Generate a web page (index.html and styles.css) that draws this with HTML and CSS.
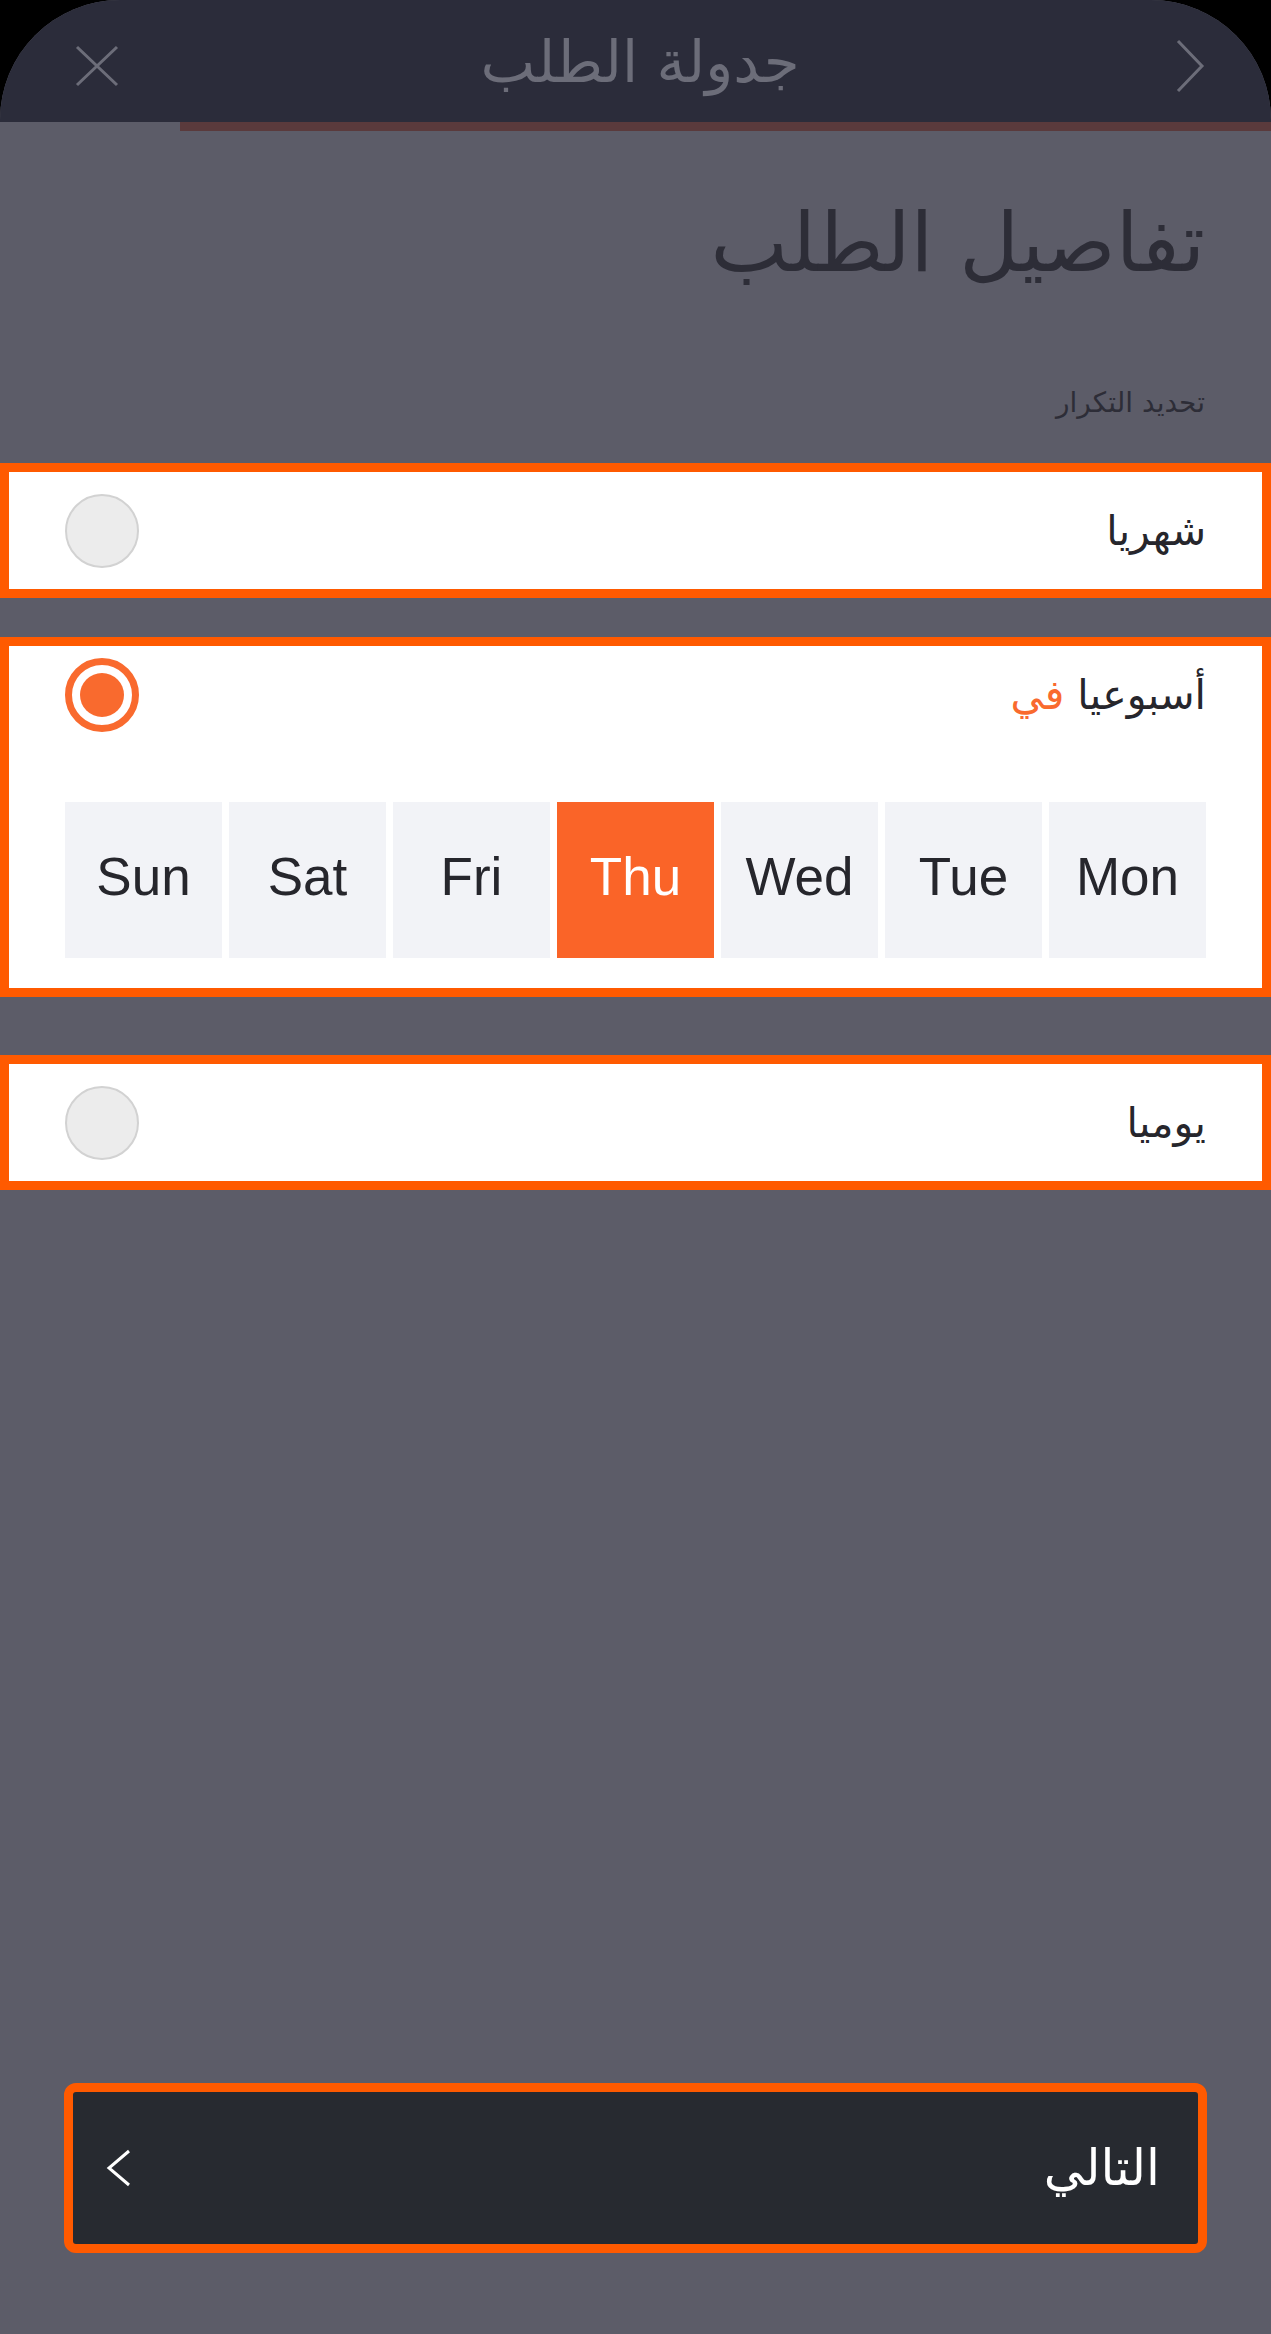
FILE: index.html
```html
<!DOCTYPE html>
<html lang="ar" dir="rtl">
<head>
  <meta charset="UTF-8" />
  <meta name="viewport" content="width=device-width, initial-scale=1.0"/>
  <title>جدولة الطلب</title>
  <link rel="stylesheet" href="styles.css">
</head>
<body>
  <div class="screen">
    <header class="topbar">
      <button class="nav-btn back" aria-label="رجوع">
        <svg width="30" height="54" viewBox="0 0 30 54"><polyline points="3,2 27,27 3,52" fill="none" stroke="#6c6d79" stroke-width="3"/></svg>
      </button>
      <h1 class="topbar-title">جدولة الطلب</h1>
      <button class="nav-btn close" aria-label="إغلاق">
        <svg width="44" height="42" viewBox="0 0 44 42"><path d="M2 2 L42 40 M42 2 L2 40" fill="none" stroke="#6c6d79" stroke-width="3"/></svg>
      </button>
    </header>
    <div class="progress"><div class="progress-fill"></div></div>

    <main class="content">
      <h2 class="page-title">تفاصيل الطلب</h2>
      <p class="section-label">تحديد التكرار</p>

      <div class="option">
        <div class="option-row">
          <span class="option-label">شهريا</span>
          <span class="radio"></span>
        </div>
      </div>

      <div class="option option-open">
        <div class="option-row">
          <span class="option-label">أسبوعيا <span class="accent">في</span></span>
          <span class="radio checked"></span>
        </div>
        <div class="days">
          <div class="day">Mon</div>
          <div class="day">Tue</div>
          <div class="day">Wed</div>
          <div class="day active">Thu</div>
          <div class="day">Fri</div>
          <div class="day">Sat</div>
          <div class="day">Sun</div>
        </div>
      </div>

      <div class="option option-last">
        <div class="option-row">
          <span class="option-label">يوميا</span>
          <span class="radio"></span>
        </div>
      </div>
    </main>

    <footer class="actions">
      <button class="next-btn">
        <span>التالي</span>
        <svg width="26" height="38" viewBox="0 0 26 38"><polyline points="23,2 3,19 23,36" fill="none" stroke="#fff" stroke-width="3"/></svg>
      </button>
    </footer>
  </div>
</body>
</html>
```

FILE: styles.css
```css
html, body {
  margin: 0;
  padding: 0;
}
body {
  background-color: #000;
  font-family: "Liberation Sans", "DejaVu Sans", sans-serif;
  color: #2d2d37;
}
.screen {
  width: 1271px;
  height: 2334px;
  background-color: #5c5c68;
  border-radius: 120px 120px 0 0;
  overflow: hidden;
  display: flex;
  flex-direction: column;
}
.topbar {
  height: 122px;
  box-sizing: border-box;
  padding: 10px 66px 0 75px;
  background-color: #2b2c3a;
  display: grid;
  grid-template-columns: 1fr auto 1fr;
  align-items: center;
}
.nav-btn {
  background: none;
  border: none;
  padding: 0;
  display: flex;
}
.back {
  justify-self: start;
}
.close {
  justify-self: end;
}
.topbar-title {
  margin: 0 0 8px;
  font-family: "DejaVu Sans", sans-serif;
  font-weight: normal;
  font-size: 58px;
  color: #6c6d79;
  line-height: 1;
}
.progress {
  height: 9px;
  background-color: #5c5c68;
  display: flex;
}
.progress-fill {
  width: 1091px;
  background-color: #5a3a3c;
}
.content {
  flex: 1;
}
.page-title {
  margin: 62px 66px 0;
  font-family: "DejaVu Sans", sans-serif;
  font-weight: normal;
  font-size: 82px;
  line-height: 100px;
  color: #2d2d37;
}
.section-label {
  margin: 90px 66px 40px;
  font-family: "DejaVu Sans", sans-serif;
  font-size: 28px;
  line-height: 40px;
  color: #2d2d37;
}
.option {
  background-color: #fff;
  border: 9px solid #ff5a00;
  padding: 0 56px;
  margin-bottom: 39px;
}
.option-row {
  height: 117px;
  display: flex;
  align-items: center;
  justify-content: space-between;
}
.option-open {
  padding-top: 12px;
  padding-bottom: 30px;
  margin-bottom: 58px;
}
.option-open .option-row {
  height: 74px;
  margin-bottom: 70px;
}
.option-label {
  font-family: "DejaVu Sans", sans-serif;
  font-size: 41px;
  color: #26262c;
}
.accent {
  color: #f96a2e;
}
.radio {
  width: 74px;
  height: 74px;
  box-sizing: border-box;
  border-radius: 50%;
  background-color: #ececec;
  border: 2px solid #d2d2d2;
  position: relative;
}
.radio.checked {
  background-color: #fff;
  border: 7px solid #f96a2e;
}
.radio.checked::after {
  content: "";
  position: absolute;
  top: 8px;
  left: 8px;
  width: 44px;
  height: 44px;
  border-radius: 50%;
  background-color: #f96a2e;
}
.days {
  display: grid;
  grid-template-columns: repeat(7, 157px);
  gap: 7px;
}
.day {
  height: 156px;
  box-sizing: border-box;
  padding-bottom: 8px;
  background-color: #f2f3f7;
  display: flex;
  align-items: center;
  justify-content: center;
  font-family: "Liberation Sans", sans-serif;
  font-size: 53px;
  color: #26262c;
}
.day.active {
  background-color: #fa6428;
  color: #fff;
}
.actions {
  padding: 0 64px 81px;
}
.next-btn {
  width: 100%;
  height: 170px;
  box-sizing: border-box;
  background-color: #272a30;
  border: 9px solid #ff5a00;
  border-radius: 12px;
  padding: 0 38px 0 33px;
  display: flex;
  align-items: center;
  justify-content: space-between;
  color: #fff;
  font-family: "DejaVu Sans", sans-serif;
  font-size: 50px;
}
```
